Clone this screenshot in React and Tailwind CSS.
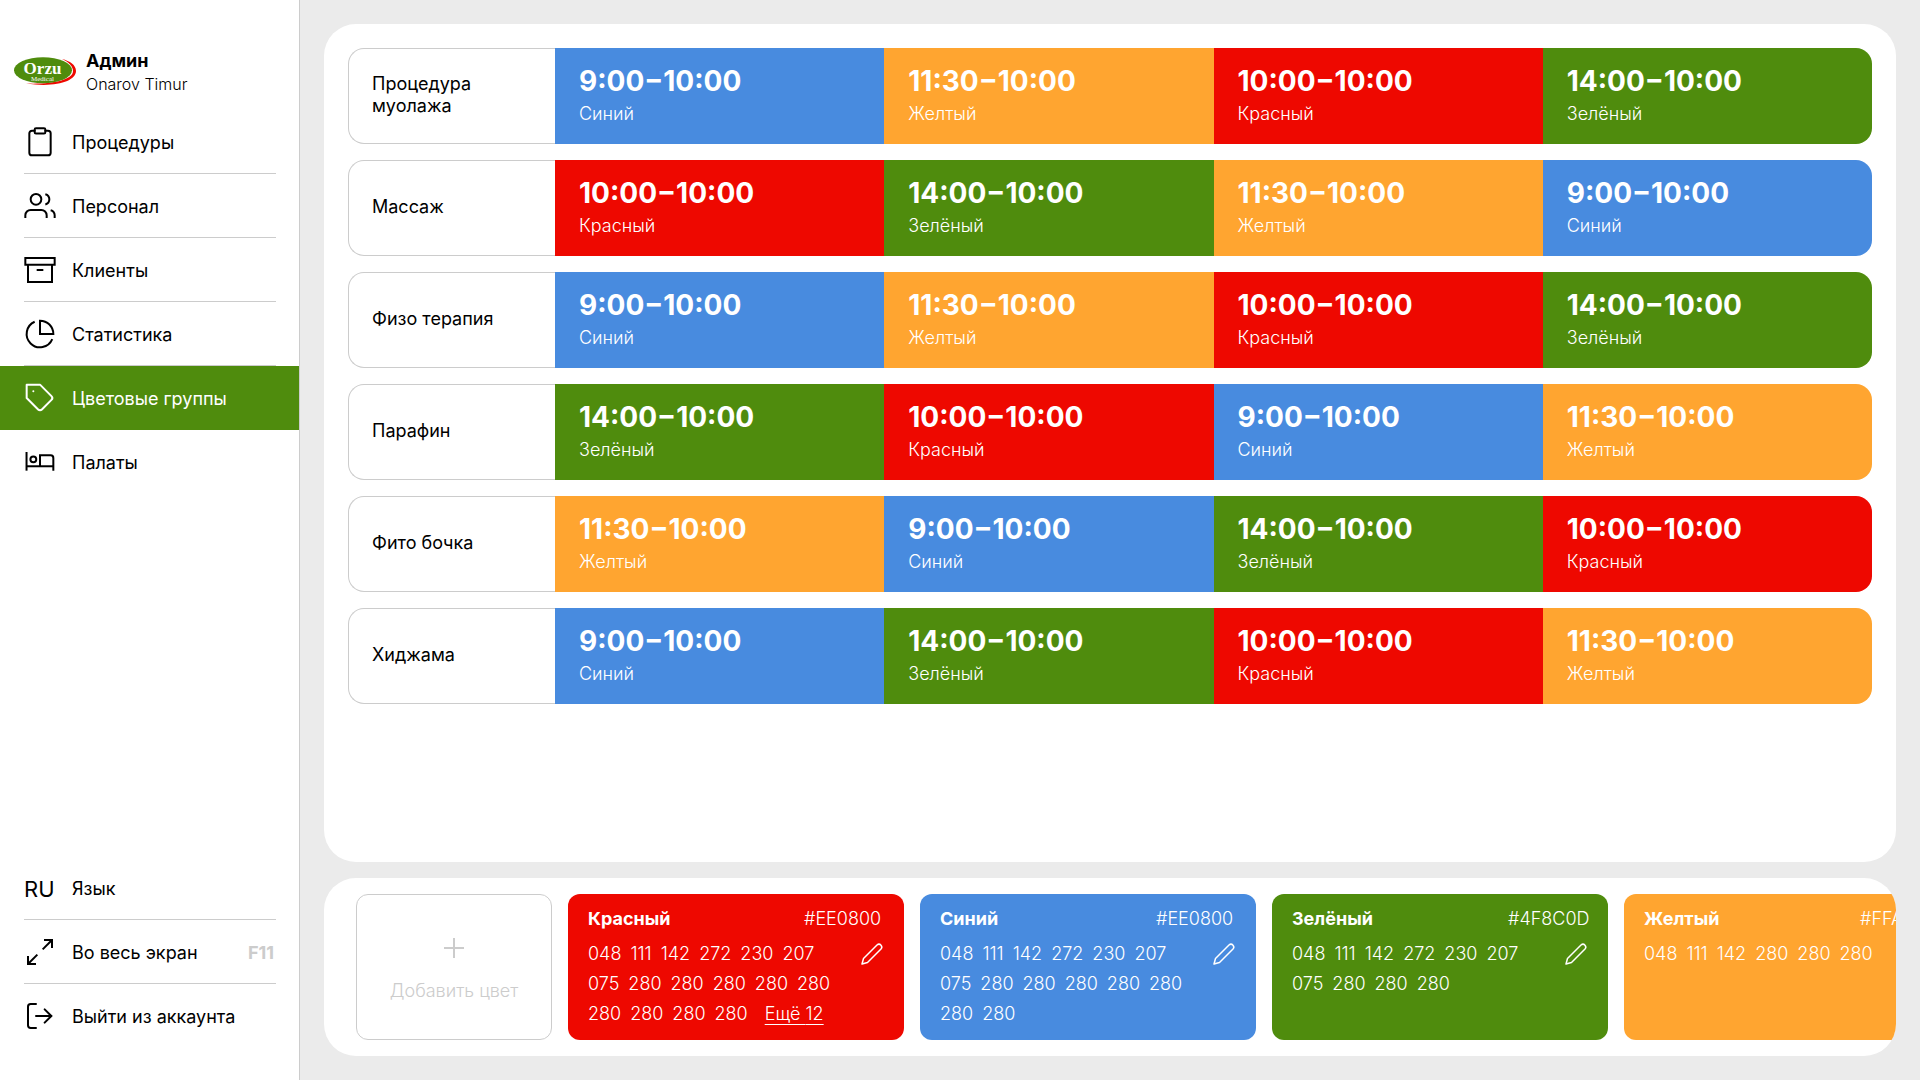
import React, { useState } from 'react'

const menuItems = [
  { id: 'procedures', title: 'Процедуры', icon: ClipboardIcon },
  { id: 'staff', title: 'Персонал', icon: UsersIcon },
  { id: 'clients', title: 'Клиенты', icon: ArchiveIcon },
  { id: 'stats', title: 'Статистика', icon: PieIcon },
  { id: 'colors', title: 'Цветовые группы', icon: TagIcon },
  { id: 'rooms', title: 'Палаты', icon: BedIcon }
]

const groups = {
  red: { title: 'Красный', time: '10:00−10:00', bg: 'bg-[#ee0800]' },
  blue: { title: 'Синий', time: '9:00−10:00', bg: 'bg-[#488bdf]' },
  green: { title: 'Зелёный', time: '14:00−10:00', bg: 'bg-[#4f8c0d]' },
  yellow: { title: 'Желтый', time: '11:30−10:00', bg: 'bg-[#ffa530]' }
}

const schedule = [
  { title: 'Процедура муолажа', slots: ['blue', 'yellow', 'red', 'green'] },
  { title: 'Массаж', slots: ['red', 'green', 'yellow', 'blue'] },
  { title: 'Физо терапия', slots: ['blue', 'yellow', 'red', 'green'] },
  { title: 'Парафин', slots: ['green', 'red', 'blue', 'yellow'] },
  { title: 'Фито бочка', slots: ['yellow', 'blue', 'green', 'red'] },
  { title: 'Хиджама', slots: ['blue', 'green', 'red', 'yellow'] }
]

const cards = [
  {
    group: 'red',
    code: '#EE0800',
    more: 12,
    clients: ['048', '111', '142', '272', '230', '207', '075', '280', '280', '280', '280', '280', '280', '280', '280', '280']
  },
  {
    group: 'blue',
    code: '#EE0800',
    clients: ['048', '111', '142', '272', '230', '207', '075', '280', '280', '280', '280', '280', '280', '280']
  },
  {
    group: 'green',
    code: '#4F8C0D',
    clients: ['048', '111', '142', '272', '230', '207', '075', '280', '280', '280']
  },
  {
    group: 'yellow',
    code: '#FFA530',
    clients: ['048', '111', '142', '280', '280', '280']
  }
]

function Icon({ children, round = true }) {
  return (
    <svg
      viewBox="0 0 24 24"
      className="w-8 h-8 shrink-0"
      fill="none"
      stroke="currentColor"
      strokeWidth="1.5"
      strokeLinecap={round ? 'round' : 'butt'}
      strokeLinejoin={round ? 'round' : 'miter'}
      aria-hidden="true"
    >
      {children}
    </svg>
  )
}

function ClipboardIcon() {
  return (
    <Icon>
      <path d="M16 3.5h2a2 2 0 0 1 2 2V20a2 2 0 0 1-2 2H6a2 2 0 0 1-2-2V5.5a2 2 0 0 1 2-2h2" />
      <rect x="8" y="1.7" width="8" height="4" rx="1" />
    </Icon>
  )
}

function UsersIcon() {
  return (
    <Icon round={false}>
      <path d="M17 21v-2a4 4 0 0 0-4-4H5a4 4 0 0 0-4 4v2" />
      <circle cx="9" cy="7" r="4" />
      <path d="M23 21v-2a4 4 0 0 0-3-3.87" />
      <path d="M16 3.13a4 4 0 0 1 0 7.75" />
    </Icon>
  )
}

function ArchiveIcon() {
  return (
    <Icon round={false}>
      <path d="M21 8v13H3V8" />
      <path d="M1 3h22v5H1z" />
      <path d="M9.5 12h5" />
    </Icon>
  )
}

function PieIcon() {
  return (
    <Icon round={false}>
      <path d="M21.21 15.89A10 10 0 1 1 8 2.83" />
      <path d="M22 12A10 10 0 0 0 12 2v10z" />
    </Icon>
  )
}

function TagIcon() {
  return (
    <Icon>
      <path d="M20.59 13.41l-7.17 7.17a2 2 0 0 1-2.83 0L2 12V2h10l8.59 8.59a2 2 0 0 1 0 2.82z" />
      <path d="M7 7h.01" />
    </Icon>
  )
}

function BedIcon() {
  return (
    <Icon round={false}>
      <path d="M1.9 4.5v14" />
      <path d="M1.9 15.2H22" />
      <path d="M22 18.5V9a2 2 0 0 0-2-2h-8v8" />
      <circle cx="7" cy="10" r="2.2" />
    </Icon>
  )
}

function ExpandIcon() {
  return (
    <Icon round={false}>
      <path d="M15 3h6v6" />
      <path d="M9 21H3v-6" />
      <path d="M21 3l-7 7" />
      <path d="M3 21l7-7" />
    </Icon>
  )
}

function LogoutIcon() {
  return (
    <Icon>
      <path d="M9 21H5a2 2 0 0 1-2-2V5a2 2 0 0 1 2-2h4" />
      <path d="M15.5 7l5 5-5 5" />
      <path d="M20.5 12H9" />
    </Icon>
  )
}

function PencilIcon() {
  return (
    <svg viewBox="0 0 24 24" className="w-6 h-6" fill="none" stroke="currentColor" strokeWidth="1.5" strokeLinejoin="round" aria-hidden="true">
      <path d="M17 3a2.85 2.85 0 0 1 4 0.2a2.85 2.85 0 0 1 0 3.8L7.5 20.5L2 22l1.5-5.5z" />
    </svg>
  )
}

function Logo() {
  return (
    <svg viewBox="0 0 62 29" className="w-[62px] h-[29px] mb-1 shrink-0" role="img" aria-label="Orzu Medical">
      <path d="M48 2C56 4 62 8 62 14C62 24 42 31 12 26.5C38 27.5 59 23 59 14C59 9.5 55 5 48 2z" fill="#ee0800" />
      <ellipse cx="29" cy="13.2" rx="29" ry="13" fill="#4f8c0d" />
      <text x="28.5" y="16.5" textAnchor="middle" fontFamily="Liberation Serif, serif" fontWeight="700" fontSize="17" fill="#fff">Orzu</text>
      <text x="28.5" y="23.5" textAnchor="middle" fontFamily="Liberation Serif, serif" fontSize="7" fill="#fff">Medical</text>
    </svg>
  )
}

function MenuLink({ item, active, last, onSelect }) {
  return (
    <li className={active ? 'pl-6 pr-[23px] bg-[#4f8c0d] text-white' : 'pl-6 pr-[23px]'}>
      <a
        href={`#${item.id}`}
        onClick={() => onSelect(item.id)}
        aria-current={active ? 'page' : undefined}
        className={`flex items-center gap-4 h-16 ${active || last ? '' : 'border-b border-[#ccc]'}`}
      >
        <item.icon />
        <span className="pt-0.5">{item.title}</span>
      </a>
    </li>
  )
}

function Sidebar() {
  const [current, setCurrent] = useState('colors')

  return (
    <aside className="flex flex-col shrink-0 w-[300px] bg-white border-r border-[#ccc]">
      <div className="flex items-center gap-2.5 pl-3.5 pt-[50px] pb-3.5">
        <Logo />
        <div>
          <div className="font-bold leading-[22px]">Админ</div>
          <div className="text-base leading-6 font-light">Onarov Timur</div>
        </div>
      </div>

      <nav>
        <ul>
          {menuItems.map((item, index) => (
            <MenuLink
              key={item.id}
              item={item}
              active={item.id === current}
              last={index === menuItems.length - 1}
              onSelect={setCurrent}
            />
          ))}
        </ul>
      </nav>

      <div className="mt-auto pl-6 pr-[23px] pb-8">
        <button type="button" className="flex items-center gap-4 w-full h-16 border-b border-[#ccc]">
          <span className="w-8 pt-0.5 text-[22px] text-left">RU</span>
          <span className="pt-0.5">Язык</span>
        </button>
        <button type="button" className="flex items-center gap-4 w-full h-16 border-b border-[#ccc]">
          <ExpandIcon />
          <span className="pt-0.5">Во весь экран</span>
          <kbd className="ml-auto pt-0.5 pr-0.5 font-[Inter,sans-serif] text-[18px] font-bold text-[#ccc]">F11</kbd>
        </button>
        <button type="button" className="flex items-center gap-4 w-full h-16">
          <LogoutIcon />
          <span className="pt-0.5">Выйти из аккаунта</span>
        </button>
      </div>
    </aside>
  )
}

function Schedule() {
  return (
    <section className="flex-1 px-6 py-2 bg-white rounded-[32px]">
      <table className="w-full table-fixed border-separate border-spacing-x-0 border-spacing-y-4">
        <colgroup>
          <col className="w-[207px]" />
          <col span={4} />
        </colgroup>
        <tbody>
          {schedule.map((row) => (
            <tr key={row.title} className="h-24">
              <th
                scope="row"
                className="px-[23px] pb-0.5 text-left font-normal align-middle border border-r-0 border-[#ccc] rounded-l-2xl"
              >
                {row.title}
              </th>
              {row.slots.map((slot) => (
                <td key={slot} className={`px-6 pt-4 align-top text-white last:rounded-r-2xl ${groups[slot].bg}`}>
                  <div className="mb-[5px] text-[28px] leading-[34px] font-bold">{groups[slot].time}</div>
                  <div className="font-light">{groups[slot].title}</div>
                </td>
              ))}
            </tr>
          ))}
        </tbody>
      </table>
    </section>
  )
}

function ColorCard({ card }) {
  const group = groups[card.group]

  return (
    <article className={`shrink-0 w-[336px] px-5 pt-3.5 pb-[11px] text-white rounded-xl ${group.bg}`}>
      <div className="flex justify-between mb-[9px]">
        <h3 className="font-bold">{group.title}</h3>
        <span className="w-20 font-light whitespace-nowrap">{card.code}</span>
      </div>
      <div className="flex items-start gap-4">
        <ul className="flex flex-wrap flex-1 gap-x-[9px] leading-[30px] font-light">
          {card.clients.map((number, index) => (
            <li key={index}>{number}</li>
          ))}
          {card.more && (
            <li className="ml-2">
              <button type="button" className="underline underline-offset-4 decoration-1">
                Ещё {card.more}
              </button>
            </li>
          )}
        </ul>
        <button type="button" aria-label="Изменить" className="mt-[3px]">
          <PencilIcon />
        </button>
      </div>
    </article>
  )
}

function ColorGroups() {
  return (
    <section className="flex gap-4 py-4 pl-8 bg-white rounded-[32px] overflow-hidden">
      <button
        type="button"
        className="flex flex-col items-center justify-center gap-4 shrink-0 w-[196px] min-h-[146px] border border-[#ccc] rounded-xl font-light text-[#ccc]"
      >
        <svg viewBox="0 0 32 32" className="w-8 h-8" fill="none" stroke="currentColor" strokeWidth="2" aria-hidden="true">
          <path d="M16 6v20M6 16h20" />
        </svg>
        Добавить цвет
      </button>
      {cards.map((card) => (
        <ColorCard key={card.group} card={card} />
      ))}
    </section>
  )
}

export default function App() {
  return (
    <div className="flex min-h-screen bg-[#ebebeb] font-[Inter,sans-serif] text-[18px] leading-[22px] text-black">
      <Sidebar />
      <main className="flex flex-col flex-1 gap-4 min-w-0 p-6">
        <Schedule />
        <ColorGroups />
      </main>
    </div>
  )
}
